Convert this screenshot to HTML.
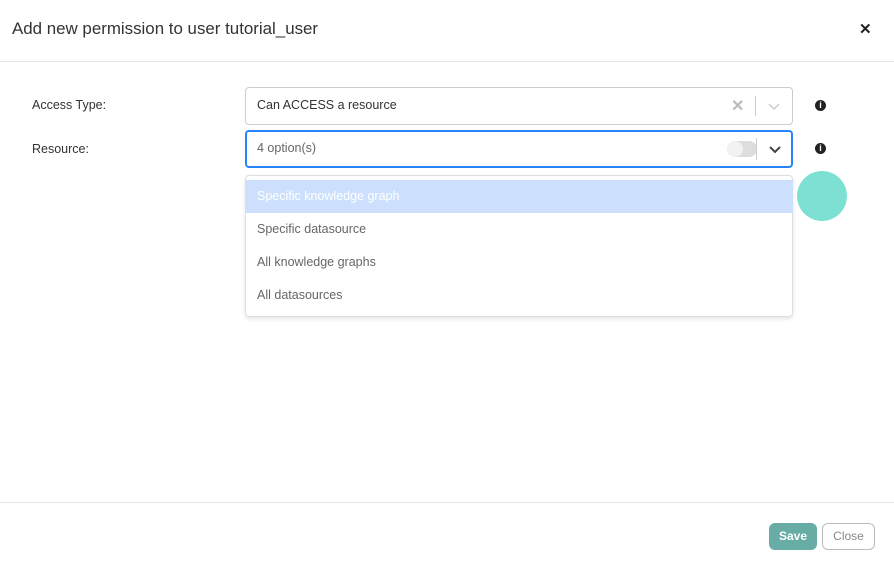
<!DOCTYPE html>
<html><head><style>
*{box-sizing:border-box;margin:0;padding:0}
body{width:894px;height:568px;background:#fff;font-family:"Liberation Sans",sans-serif;position:relative;overflow:hidden;color:#333}
.abs{position:absolute}
.title{left:12px;top:19px;font-size:16.9px;color:#333}
.x{left:859px;top:20px;font-size:15px;font-weight:bold;color:#222}
.hr{left:0;width:894px;height:1px;background:#e5e5e5}
.lbl{font-size:12.5px;color:#333}
.box{left:245px;width:548px;height:38px;border:1px solid #ccc;border-radius:4px;font-size:12.5px}
.info{width:11px;height:11px;border-radius:50%;background:#222;color:#fff;font-size:9px;font-weight:bold;text-align:center;line-height:11px}
.opt{left:245px;width:548px;height:33px;font-size:12.5px;color:#666;padding-left:12px;line-height:33px}
</style></head><body>
<div class="abs title">Add new permission to user tutorial_user</div>
<div class="abs x">✕</div>
<div class="abs hr" style="top:61px"></div>
<div class="abs lbl" style="left:32px;top:98px">Access Type:</div>
<div class="abs lbl" style="left:32px;top:142px">Resource:</div>
<div class="abs box" style="top:87px">
 <div class="abs" style="left:11px;top:10px;color:#333">Can ACCESS a resource</div>
 <div class="abs" style="left:485px;top:8px;color:#bbb;font-size:16px;font-weight:bold">✕</div>
 <div class="abs" style="left:509px;top:8px;width:1px;height:20px;background:#ccc"></div>
 <svg class="abs" style="left:521px;top:13px" width="14" height="10"><path d="M2 3l5 5 5-5" stroke="#ccc" stroke-width="1.5" fill="none"/></svg>
</div>
<div class="abs info" style="left:815px;top:100px">i</div>
<div class="abs box" style="top:130px;border:2px solid #2684ff">
 <div class="abs" style="left:10px;top:9px;color:#666">4 option(s)</div>
 <div class="abs" style="left:480px;top:9px;width:30px;height:16px;border-radius:8px;background:#ddd"><div style="width:16px;height:16px;border-radius:50%;background:#f2f2f2"></div></div>
 <div class="abs" style="left:509px;top:6px;width:1px;height:22px;background:#ccc"></div>
 <svg class="abs" style="left:521px;top:12px" width="14" height="10"><path d="M2 3l5 5 5-5" stroke="#444" stroke-width="2" fill="none"/></svg>
</div>
<div class="abs info" style="left:815px;top:143px">i</div>
<div class="abs" style="left:245px;top:175px;width:548px;height:142px;border:1px solid #ddd;border-radius:4px;box-shadow:0 2px 4px rgba(0,0,0,.1)"></div>
<div class="abs opt" style="top:180px;background:#cce0fd;color:#fff">Specific knowledge graph</div>
<div class="abs opt" style="top:213px">Specific datasource</div>
<div class="abs opt" style="top:246px">All knowledge graphs</div>
<div class="abs opt" style="top:279px">All datasources</div>
<div class="abs" style="left:797px;top:171px;width:50px;height:50px;border-radius:50%;background:#7de0d2"></div>
<div class="abs hr" style="top:502px"></div>
<div class="abs" style="left:769px;top:523px;width:48px;height:27px;border-radius:6px;background:#67ada5;color:#fff;font-size:12px;font-weight:bold;text-align:center;line-height:27px">Save</div>
<div class="abs" style="left:822px;top:523px;width:53px;height:27px;border-radius:6px;border:1px solid #bbb;color:#888;font-size:12px;text-align:center;line-height:25px">Close</div>
</body></html>
